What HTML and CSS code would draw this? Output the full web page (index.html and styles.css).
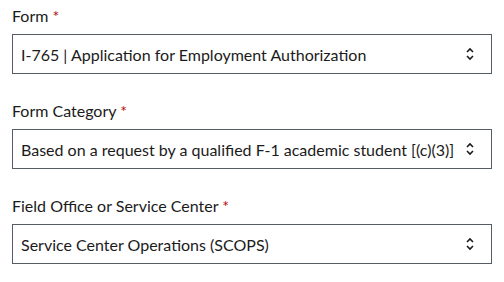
FILE: index.html
```html
<!DOCTYPE html>
<html>
<head>
<meta charset="utf-8">
<link rel="stylesheet" href="styles.css">
</head>
<body>
<div class="form">
  <div class="field">
    <div class="label">Form <span class="req">*</span></div>
    <div class="select">
      <span class="value">I-765 | Application for Employment Authorization</span>
      <svg class="chev" width="10" height="16" viewBox="0 0 10 16"><path d="M2 6 L5 3 L8 6 M2 10 L5 13 L8 10" fill="none" stroke="#1b1b1b" stroke-width="1.6"/></svg>
    </div>
  </div>
  <div class="field">
    <div class="label">Form Category <span class="req">*</span></div>
    <div class="select">
      <span class="value">Based on a request by a qualified F-1 academic student [(c)(3)]</span>
      <svg class="chev" width="10" height="16" viewBox="0 0 10 16"><path d="M2 6 L5 3 L8 6 M2 10 L5 13 L8 10" fill="none" stroke="#1b1b1b" stroke-width="1.6"/></svg>
    </div>
  </div>
  <div class="field">
    <div class="label">Field Office or Service Center <span class="req">*</span></div>
    <div class="select">
      <span class="value">Service Center Operations (SCOPS)</span>
      <svg class="chev" width="10" height="16" viewBox="0 0 10 16"><path d="M2 6 L5 3 L8 6 M2 10 L5 13 L8 10" fill="none" stroke="#1b1b1b" stroke-width="1.6"/></svg>
    </div>
  </div>
</div>
</body>
</html>
```
FILE: styles.css
```css
html, body {
  margin: 0;
  padding: 0;
  background: #ffffff;
}
body {
  font-family: "Lato", "Open Sans", sans-serif;
  color: #1b1b1b;
}
.form {
  display: flex;
  flex-direction: column;
  gap: 27px;
  padding: 6px 12px 0 12px;
  width: 480px;
}
.field {
  display: flex;
  flex-direction: column;
  gap: 8px;
}
.label {
  font-size: 16px;
  line-height: 20px;
}
.req {
  color: #b50909;
}
.select {
  box-sizing: border-box;
  height: 40px;
  border: 1px solid #565c65;
  display: flex;
  align-items: center;
  justify-content: space-between;
  padding: 0 16px 0 8px;
  font-size: 16px;
}
.value {
  white-space: nowrap;
}
.chev {
  flex: none;
}
```
